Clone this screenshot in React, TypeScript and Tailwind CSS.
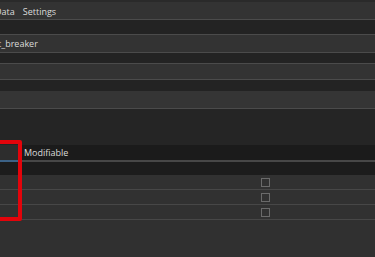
export default function App() {
  const font = { fontFamily: '"Open Sans", "Noto Sans", sans-serif' };
  const rows = [0, 1, 2];

  return (
    <div
      className="relative h-[257px] w-[375px] overflow-hidden bg-[#252525] text-[#dcdcdc]"
      style={font}
    >
      {/* menu bar */}
      <div className="h-[2px] bg-[#2a2a2a]" />
      <div className="flex h-[18px] items-center gap-[8px] border-b border-[#4b4b4b] bg-[#333333] pt-[3px] text-[9px]">
        <span className="-ml-[5px]">Data</span>
        <span>Settings</span>
      </div>

      {/* fields */}
      <div className="h-[14px] bg-[#232323]" />
      <div className="flex h-[19px] items-center border-y border-[#4b4b4b] bg-[#333333] pt-[1px] text-[9px]">
        <span className="-ml-[2px]">t_breaker</span>
      </div>
      <div className="h-[10px] bg-[#232323]" />
      <div className="h-[17px] border-y border-[#4b4b4b] bg-[#333333]" />
      <div className="h-[11px] bg-[#232323]" />
      <div className="h-[18px] border-b border-[#4b4b4b] bg-[#353535]" />
      <div className="h-[36px] bg-[#252525]" />

      {/* table */}
      <div className="flex h-[17px] border-b-2 border-[#474747] bg-[#1b1b1b] text-[9px]">
        <div className="-mb-[2px] w-[20px] border-b-2 border-[#3c6286] bg-[#2d2d2d]" />
        <div className="flex items-center pl-[4px] pt-[1px]">Modifiable</div>
      </div>
      <div className="h-[13px] bg-[#1c1c1c]" />
      <div className="bg-[#313131]">
        {rows.map((r) => (
          <div
            key={r}
            className="flex h-[15px] items-center border-b border-[#474747]"
          >
            <div className="ml-[261px] h-[9px] w-[9px] border border-[#6a6a6a]" />
          </div>
        ))}
      </div>
      <div className="h-[40px] bg-[#303030]" />

      {/* annotation */}
      <div className="absolute left-[-6px] top-[140px] h-[81px] w-[28px] rounded-[2px] border-[4px] border-[#e3040b]" />
    </div>
  );
}
